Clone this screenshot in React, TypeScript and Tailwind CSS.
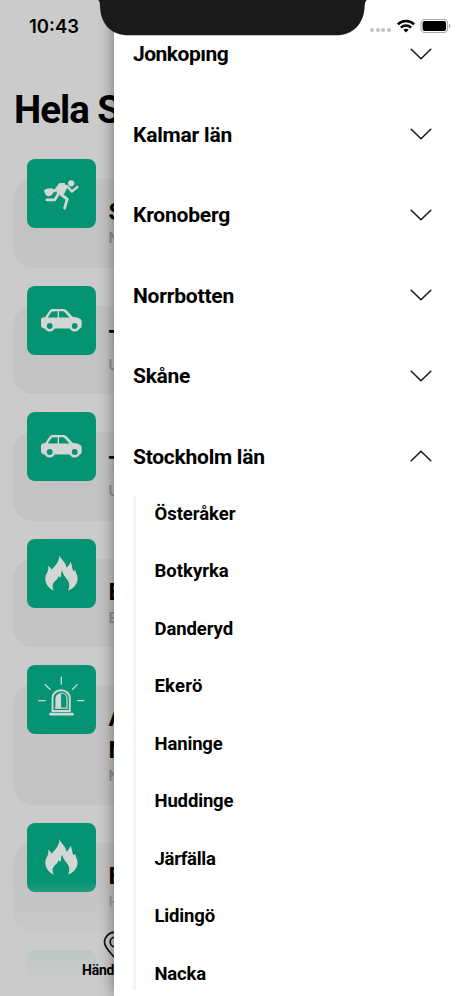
import type { ReactNode } from 'react';

type IconName = 'thief' | 'car' | 'fire' | 'siren';

interface EventItem {
  icon: IconName;
  title: string[];
  place: string;
}

const events: EventItem[] = [
  { icon: 'thief', title: ['S'], place: 'N' },
  { icon: 'car', title: ['T'], place: 'U' },
  { icon: 'car', title: ['T'], place: 'U' },
  { icon: 'fire', title: ['B'], place: 'B' },
  { icon: 'siren', title: ['A', 'N'], place: 'N' },
  { icon: 'fire', title: ['B'], place: 'H' },
];

const regions = [
  { name: 'Jonkopıng', tracking: 'tracking-[-0.5px]' },
  { name: 'Kalmar län', tracking: 'tracking-[-0.2px]' },
  { name: 'Kronoberg', tracking: 'tracking-[-0.2px]' },
  { name: 'Norrbotten', tracking: 'tracking-[-0.2px]' },
  { name: 'Skåne', tracking: 'tracking-[-0.3px]' },
  { name: 'Stockholm län', tracking: 'tracking-[-0.25px]', open: true },
];

const towns = [
  { name: 'Österåker', tracking: 'tracking-[-0.05px]' },
  { name: 'Botkyrka', tracking: 'tracking-[0px]' },
  { name: 'Danderyd', tracking: 'tracking-[-0.1px]' },
  { name: 'Ekerö', tracking: 'tracking-[0.2px]' },
  { name: 'Haninge', tracking: 'tracking-[-0.15px]' },
  { name: 'Huddinge', tracking: 'tracking-[-0.15px]' },
  { name: 'Järfälla', tracking: 'tracking-[-0.3px]' },
  { name: 'Lidingö', tracking: 'tracking-[-0.15px]' },
  { name: 'Nacka', tracking: 'tracking-[-0.2px]' },
];

const icons: Record<IconName, ReactNode> = {
  thief: (
    <g fill="none" stroke="currentColor" strokeLinecap="round" strokeLinejoin="round">
      <circle cx="44.2" cy="24.3" r="3.1" fill="currentColor" stroke="none" />
      <path d="M17 31.6 C19.5 28.8 24.5 28.8 27.4 30.6 C26.8 34 25 37.2 21.8 37.2 C18.8 37.2 17.6 34.5 17 31.6Z" fill="currentColor" stroke="none" />
      <path d="M33.5 25.8 L40.3 26.8 L35.4 36 L30 32.5Z" fill="currentColor" strokeWidth="1.8" />
      <path d="M37 25.2 H32.8 L27.8 32" strokeWidth="2.2" />
      <path d="M40 27 L44.8 32.5 L50.4 28" strokeWidth="2.3" />
      <path d="M31.5 34.5 L27.8 40.9 H19.8" strokeWidth="2.7" />
      <path d="M34 35.5 L40.2 40 L37.6 49.2" strokeWidth="2.8" />
    </g>
  ),
  car: (
    <>
      <path
        fill="currentColor"
        fillRule="evenodd"
        d="M24.9 23 H37 L39 23.8 L45.6 30.7 L51 31.8 Q54.7 32.8 54.7 35.8 V40 Q54.7 42.4 52.4 42.4 H17 Q14 42 14 39 V33.4 Q14 32 15.7 31.6 L18.2 31 L23 24Z M24.8 25.4 L20.8 31.6 H30.7 V25.2Z M32 25.2 V31.6 H42.6 L36.8 25.2Z"
      />
      <circle cx="22.7" cy="40" r="5.5" fill="currentColor" />
      <circle cx="47.7" cy="40" r="5.5" fill="currentColor" />
      <circle cx="22.7" cy="40" r="2.9" fill="#059473" />
      <circle cx="47.7" cy="40" r="2.9" fill="#059473" />
    </>
  ),
  fire: (
    <path
      fill="currentColor"
      d="M32.4 15.8 C33.4 20.6 39 22.6 39.4 28.6 C41.4 27.4 42.8 25.4 43.4 22.8 C45.6 26.4 44.6 29 46.6 32.2 L48.3 30.7 C48.4 34 50.6 35.8 50.6 39.6 C50.6 45.2 46.5 49.8 41 51.8 C43.4 46.5 42.2 42.3 39.3 39.4 C37.4 37.4 36 35 35.2 31.8 C33.7 33.8 34.4 36.4 33.5 38.8 L31.4 37.2 C31.2 40.4 28.4 41.2 26.5 44 C25 46.2 25.4 49.4 27.1 51.8 C21.4 49.2 18.2 44.6 18.3 39.2 C18.4 34.6 22.2 33 21.2 26.8 C22.7 27.6 23.8 29 24.4 30.8 C28.2 27 32.8 22 32.4 15.8Z"
    />
  ),
  siren: (
    <g fill="none" stroke="currentColor" strokeWidth="1.7" strokeLinecap="round">
      <path d="M34.3 12.2 V19.2 M11.8 35.7 H18.2 M50.6 35.7 H56.8 M18 19.6 L23.2 24.4 M50.2 19.6 L45.6 24.2" strokeWidth="1.3" />
      <path d="M25.5 46 V33.6 C25.5 28.6 29 25.2 34.1 25.2 C39.2 25.2 42.8 28.6 42.8 33.6 V46Z" strokeWidth="1.9" />
      <path d="M28.4 43.4 V34 C28.4 30.7 30.5 28.2 34.1 28.2 V43.4Z" fill="currentColor" stroke="none" />
      <path d="M34.1 28 C37.8 28 40 30.4 40 34 V43.2 H28.4" strokeWidth="1.2" />
      <path d="M23.6 49.2 H45.4" strokeWidth="2.8" />
    </g>
  ),
};

function Tile({ icon }: { icon: IconName }) {
  return (
    <div className="h-[69px] w-[69px] shrink-0 rounded-[8px] bg-[#059473] text-[#d3d6d5]">
      <svg viewBox="0 0 69 69" className="h-full w-full">
        {icons[icon]}
      </svg>
    </div>
  );
}

function EventCard({ icon, title, place }: EventItem) {
  return (
    <div className="flex gap-[12.5px] rounded-[20px] bg-[#c3c3c3] pb-[18px] pl-[14px]">
      <div className="-mt-5">
        <Tile icon={icon} />
      </div>
      <div className="pt-[17px]">
        {title.map((line) => (
          <p key={line} className="text-[24px] leading-[32px] font-bold text-black">{line}</p>
        ))}
        <p className="pb-px text-[15px] leading-[20px] font-medium text-[#8f8f8f]">{place}</p>
      </div>
      <div className="h-[70.5px]" />
    </div>
  );
}

function Chevron({ up }: { up?: boolean }) {
  return (
    <svg viewBox="0 0 22 12" className="-mt-px h-3 w-[22px]" fill="none" stroke="#161616" strokeWidth="1.5" strokeLinecap="round">
      <path d={up ? 'M1.2 10.7 L11 1.2 L20.8 10.7' : 'M1.2 1.2 L11 10.7 L20.8 1.2'} />
    </svg>
  );
}

function StatusBar() {
  return (
    <div className="absolute inset-x-0 top-0 h-12">
      <svg viewBox="0 0 270 36" className="absolute top-0 left-[97px] h-9 w-[270px]">
        <path d="M1 0 Q3 1 3 6 C3.5 24 14 35.3 32 35.3 H239 C256 35.3 267 24 267.7 6 Q267.8 1 270 0Z" fill="#1a1a1a" />
      </svg>
      <div className="flex items-start justify-between pt-[14px] pr-[9px] pl-[29px]">
        <span className="font-[Inter,sans-serif] text-[18.5px] leading-[25px] font-semibold text-black">10:43</span>
        <div className="flex pt-[4px]">
          <div className="mt-[10px] mr-[6px] flex gap-[1.7px]">
            {[0, 1, 2, 3].map((dot) => (
              <span key={dot} className="h-[4px] w-[4px] rounded-full bg-[#c2c2c2]" />
            ))}
          </div>
          <svg viewBox="0 0 18 14" className="mt-px mr-[5px] h-[14px] w-[18px]" fill="none" stroke="#000" strokeWidth="2.5">
            <path d="M.9 5.4 C5.4 .9 12.6 .9 17.1 5.4" />
            <path d="M3.9 8.6 C6.7 5.8 11.3 5.8 14.1 8.6" />
            <path d="M6.4 10.7 C7.9 9.4 10.1 9.4 11.6 10.7 L9 13.4Z" fill="#000" stroke="none" />
          </svg>
          <svg viewBox="0 0 31 15" className="h-[15px] w-[31px]">
            <rect x="1" y="1.5" width="26.6" height="13" rx="3.6" fill="none" stroke="#a8a8a8" strokeWidth="1.1" />
            <rect x="2.6" y="3.1" width="23.4" height="9.8" rx="2" fill="#000" />
            <path d="M29 5.8 Q30.6 6.4 30.6 8 T29 10.2Z" fill="#a8a8a8" />
          </svg>
        </div>
      </div>
    </div>
  );
}

export default function App() {
  return (
    <div className="relative h-[996px] w-[460px] overflow-hidden bg-[#cbcbcb] font-[Roboto,sans-serif] text-black">
      {/* EVENT LIST */}
      <main className="h-full overflow-hidden pl-[13px]">
        <h1 className="pt-[86px] pl-px text-[38.5px] leading-[48px] font-bold tracking-[-1px]">Hela S</h1>
        <div className="flex flex-col gap-[38px] pt-[45px]">
          {events.map((event, index) => (
            <EventCard key={index} {...event} />
          ))}
          <div className="-mt-5 pl-[14px]">
            <div className="h-[69px] w-[69px] rounded-[8px] bg-[#059473]" />
          </div>
        </div>
      </main>

      {/* BOTTOM TAB */}
      <div className="absolute inset-x-0 bottom-0 h-[136px] bg-linear-to-b from-[#cbcbcb]/0 from-16% via-[#cbcbcb]/92 via-66% to-[#cbcbcb] to-90%">
        <div className="flex w-[78px] flex-col items-center gap-px pt-[71px] ml-[76px]">
          <svg viewBox="0 0 24 30" className="h-[30px] w-6" fill="none" stroke="#111" strokeWidth="1.7">
            <path d="M12 27 C8 22 1.5 17 1.5 11 A10.5 9.8 0 0 1 22.5 11 C22.5 17 16 22 12 27Z" />
            <circle cx="12" cy="11" r="4.8" />
          </svg>
          <span className="self-start pl-[6px] text-[14px] leading-[16px] font-bold tracking-[-0.2px]">Händ</span>
        </div>
      </div>

      {/* REGION DRAWER */}
      <aside className="absolute inset-y-0 right-0 w-[346px] overflow-hidden bg-white pt-[14px] pl-[19px] shadow-[0_0_14px_rgba(0,0,0,0.45)]">
        {regions.map((region) => (
          <div key={region.name} className="flex h-[80.5px] items-center justify-between pr-[28.5px]">
            <span className={`pt-px text-[21px] font-bold ${region.tracking}`}>{region.name}</span>
            <Chevron up={region.open} />
          </div>
        ))}
        <div className="h-[493px] border-l-[3px] border-[#f5f5f5] pl-[18.5px]">
          {towns.map((town) => (
            <div key={town.name} className="flex h-[57.5px] items-start pt-[4.5px]">
              <span className={`text-[18.5px] leading-[25px] font-bold ${town.tracking}`}>{town.name}</span>
            </div>
          ))}
        </div>
      </aside>

      <StatusBar />
    </div>
  );
}
